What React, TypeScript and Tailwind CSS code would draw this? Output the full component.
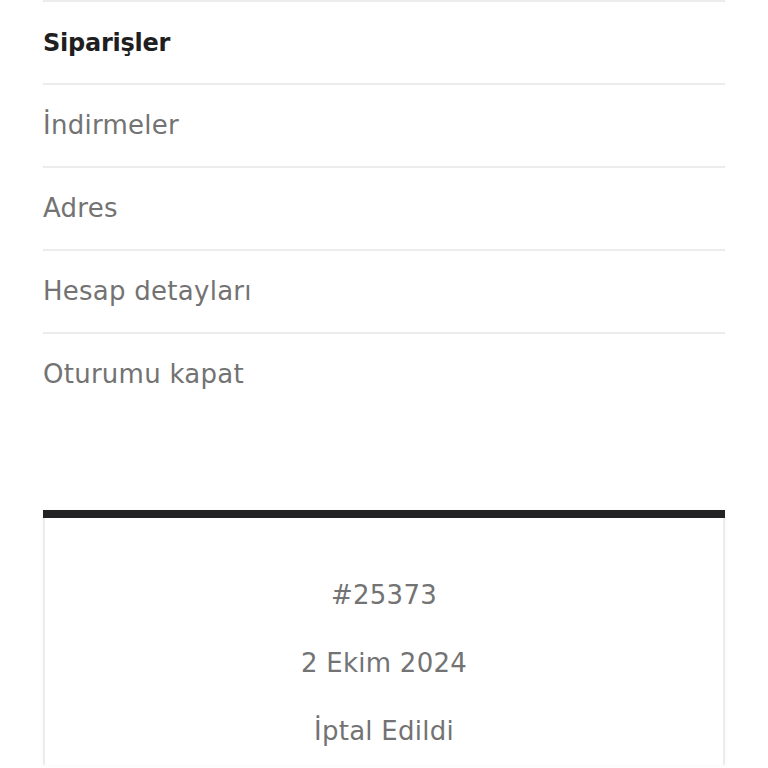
const menuItems = [
  { label: 'Siparişler', active: true },
  { label: 'İndirmeler', active: false },
  { label: 'Adres', active: false },
  { label: 'Hesap detayları', active: false },
  { label: 'Oturumu kapat', active: false },
];

const orderRows = ['#25373', '2 Ekim 2024', 'İptal Edildi'];

export default function App() {
  return (
    <div className="min-h-screen bg-white px-[43px] font-['DejaVu_Sans',sans-serif]">
      <nav>
        <ul>
          {menuItems.map((item) => (
            <li key={item.label} className="h-[83px] flex items-center border-t-2 border-[#ececec]">
              <a
                href="#"
                className={
                  item.active
                    ? 'text-[24px] font-bold text-[#1f1f22] tracking-[-0.01em]'
                    : 'text-[26px] text-[#737373] tracking-[0.01em]'
                }
              >
                {item.label}
              </a>
            </li>
          ))}
        </ul>
      </nav>

      <div className="mt-[95px] shadow-[0_0_4px_rgba(0,0,0,0.04)]">
        <div className="h-2 bg-[#222225]" />
        <div className="border-x-2 border-[#ececec] pt-[43px] flex flex-col items-center">
          {orderRows.map((row) => (
            <div key={row} className="h-[68px] flex items-center text-[26px] text-[#737373] tracking-[0.01em]">
              {row}
            </div>
          ))}
        </div>
      </div>
    </div>
  );
}
